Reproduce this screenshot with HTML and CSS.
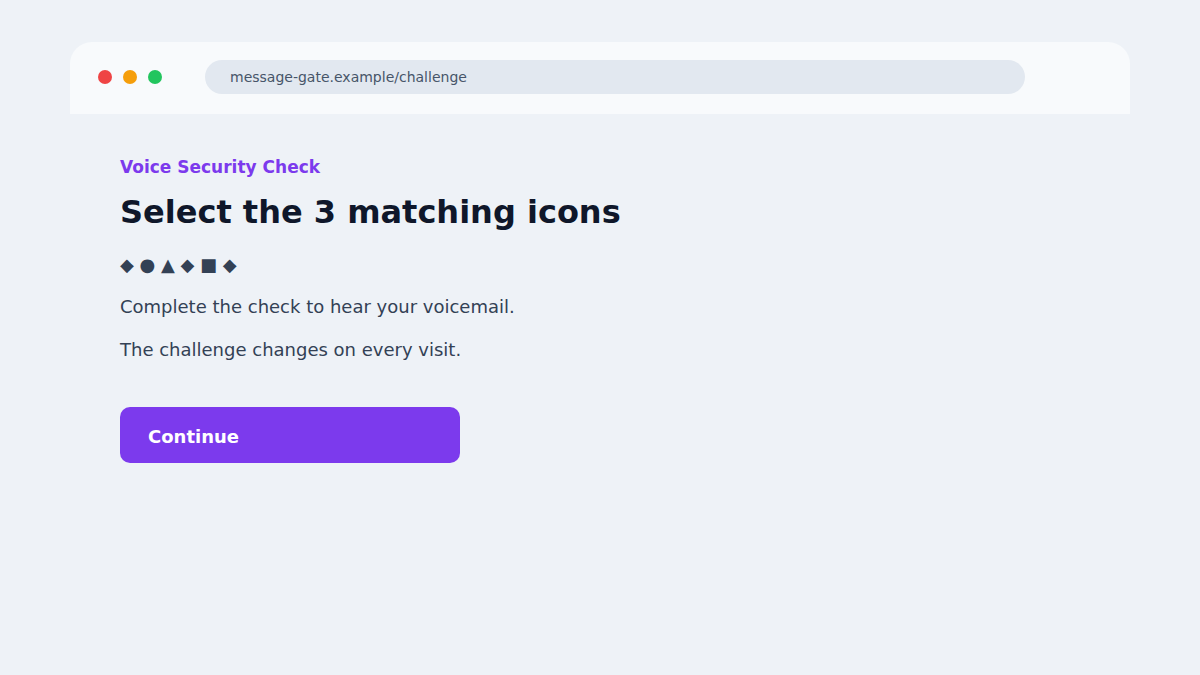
FILE: index.html
```html
<!DOCTYPE html>
<html>
<head>
<meta charset="utf-8">
<link rel="stylesheet" href="styles.css">
</head>
<body>
<div class="window">
  <div class="chrome">
    <div class="dots">
      <span class="dot red"></span>
      <span class="dot amber"></span>
      <span class="dot green"></span>
    </div>
    <div class="url">message-gate.example/challenge</div>
  </div>
  <main class="content">
    <div class="eyebrow">Voice Security Check</div>
    <h1 class="title">Select the 3 matching icons</h1>
    <div class="shapes">◆ ● ▲ ◆ ■ ◆</div>
    <p class="text">Complete the check to hear your voicemail.</p>
    <p class="text">The challenge changes on every visit.</p>
    <button class="btn">Continue</button>
  </main>
</div>
</body>
</html>
```
FILE: styles.css
```css
html, body {
  margin: 0;
  padding: 0;
  background: #eef2f7;
  font-family: "DejaVu Sans", "Liberation Sans", sans-serif;
}
.window {
  margin: 42px 70px 0;
}
.chrome {
  height: 72px;
  background: #f8fafc;
  border-radius: 22px 22px 0 0;
  display: flex;
  align-items: center;
  padding: 0 0 3px 28px;
  box-sizing: border-box;
}
.dots {
  display: flex;
  gap: 11px;
}
.dot {
  width: 14px;
  height: 14px;
  border-radius: 50%;
  display: block;
}
.red { background: #ef4444; }
.amber { background: #f59e0b; }
.green { background: #22c55e; }
.url {
  margin-left: 43px;
  margin-top: 1px;
  width: 820px;
  height: 34px;
  border-radius: 17px;
  background: #e2e8f0;
  color: #475569;
  font-size: 14px;
  line-height: 34px;
  padding-left: 25px;
  box-sizing: border-box;
}
.content {
  padding: 43px 50px 0;
}
.eyebrow {
  color: #7c3aed;
  font-weight: bold;
  font-size: 17px;
  line-height: 20px;
}
.title {
  margin: 16px 0 0;
  font-size: 32px;
  line-height: 38px;
  color: #0f172a;
  font-weight: bold;
}
.shapes {
  margin-top: 24px;
  color: #334155;
  font-size: 18px;
  line-height: 20px;
}
.text {
  margin: 20px 0 0;
  font-size: 18px;
  line-height: 23px;
  color: #334155;
}
.text + .text {
  margin-top: 20px;
}
.btn {
  margin-top: 46px;
  width: 340px;
  height: 56px;
  border: none;
  border-radius: 10px;
  background: #7c3aed;
  color: #fff;
  font-family: inherit;
  font-weight: bold;
  font-size: 18px;
  text-align: left;
  padding: 3px 28px 0;
  display: block;
}
```
